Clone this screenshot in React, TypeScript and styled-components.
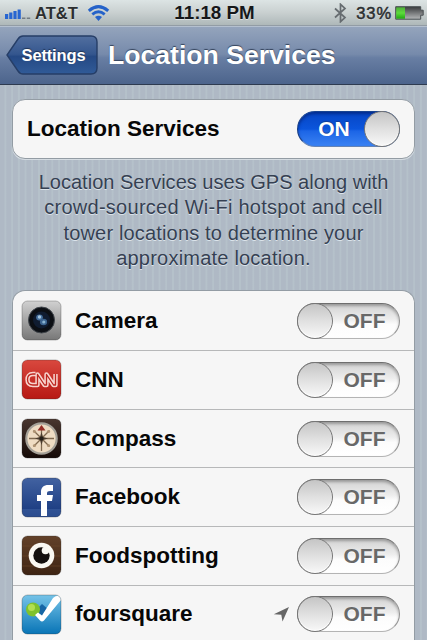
import React from "react";
import styled, {createGlobalStyle} from "styled-components";

const GlobalStyle = createGlobalStyle`
  * {
    box-sizing: border-box;
  }

  body {
    margin: 0;
    overflow: hidden;
    font-family: "Liberation Sans", Arial, sans-serif;
  }
`;

const Screen = styled.main`
  width: 427px;
  height: 640px;
  overflow: hidden;
  background: repeating-linear-gradient(
    90deg,
    #afb9c5 0 4px,
    #b5c1ca 5px 6px,
    #afb9c5 6.7px
  );
`;

const StatusBar = styled.header`
  display: grid;
  grid-template-columns: 1fr auto 1fr;
  align-items: center;
  height: 26px;
  padding: 0 3px 0 5px;
  background: linear-gradient(#dce4e4, #c9d0d0 50%, #aeb8b9);
  border-bottom: 1px solid #929ca5;
  color: #151719;
`;

const StatusGroup = styled.div<{$end?: boolean}>`
  display: flex;
  align-items: center;
  justify-content: ${({$end}) => ($end ? "flex-end" : "flex-start")};
`;

const StatusText = styled.span<{$size?: number; $spacing?: number}>`
  font-weight: 700;
  font-size: ${({$size = 18}) => $size}px;
  letter-spacing: ${({$spacing = 0}) => $spacing}px;
  line-height: 26px;
  white-space: nowrap;
  text-shadow: 0 1px 0 rgba(255, 255, 255, 0.5);
`;

const Carrier = styled(StatusText)`
  margin: 0 9px 0 4px;
  color: #2b2e30;
`;

const Percent = styled(StatusText)`
  margin: 0 3px 0 9px;
  color: #2b2e30;
  font-weight: 400;
  -webkit-text-stroke: 0.5px #2b2e30;
`;

const NavBar = styled.nav`
  display: flex;
  align-items: center;
  height: 59px;
  padding: 0 0 1px 6px;
  background: linear-gradient(#94a4bc, #768aab 48%, #687ea3 54%, #4c648c);
  border-top: 1px solid #b4c0cf;
  border-bottom: 1px solid #2e3b50;
`;

const BackButton = styled.button`
  display: grid;
  width: 92px;
  height: 40px;
  padding: 0;
  border: none;
  background: none;

  > * {
    grid-area: 1 / 1;
  }
`;

const BackLabel = styled.span`
  align-self: center;
  z-index: 1;
  padding: 0 0 0 3px;
  color: #fff;
  font: 700 16.5px "Liberation Sans", Arial, sans-serif;
  letter-spacing: -0.15px;
  text-shadow: 0 -1px 1px #203354;
`;

const Title = styled.h1`
  margin: 0 0 1px 10px;
  color: #fff;
  font-size: 26.6px;
  line-height: 32px;
  white-space: nowrap;
  text-shadow: 0 -1px 1px #34435c;
`;

const Content = styled.div`
  padding: 14px 12px 0;
`;

const Group = styled.section`
  overflow: hidden;
  background: #f6f6f6;
  border: 1px solid #939ca4;
  border-radius: 13px;
  box-shadow: 0 1px 0 #d5dce2;
`;

const AppGroup = styled(Group)`
  margin-top: 19px;
  border-bottom: none;
  border-radius: 13px 13px 0 0;
`;

const Row = styled.div<{$master?: boolean}>`
  display: flex;
  align-items: center;
  height: ${({$master}) => ($master ? 58 : 59)}px;
  padding: 0 14px 0 ${({$master}) => ($master ? 14 : 8)}px;

  & + & {
    height: 58.6px;
    border-top: 1px solid #b7b8b9;
  }
`;

const RowLabel = styled.span<{$inset?: boolean}>`
  flex: 1;
  margin-left: ${({$inset}) => ($inset ? 13 : 0)}px;
  color: #070707;
  font-weight: 700;
  font-size: 22.5px;
  line-height: 28px;
`;

const Description = styled.p`
  margin: 11px 0 0;
  color: #354052;
  font-size: 20.05px;
  line-height: 25.3px;
  text-align: center;
  text-shadow: 0 1px 0 #dce4eb;
`;

const Line = styled.span<{$spacing?: number}>`
  display: block;
  letter-spacing: ${({$spacing = 0}) => $spacing}px;
`;

const Track = styled.button<{$on: boolean}>`
  display: flex;
  flex-direction: ${({$on}) => ($on ? "row-reverse" : "row")};
  align-items: center;
  width: 103px;
  height: 36px;
  padding: 0;
  border: 1px solid;
  border-color: ${({$on}) =>
    $on ? "#174391 #43638f #6684b4 #153b83" : "#6e6e6e #929292 #b4b4b4 #777"};
  border-radius: 19px;
  background: ${({$on}) =>
    $on
      ? "linear-gradient(#0645c4, #0b55dc 50%, #1c65e6 56%, #3a82f3)"
      : "linear-gradient(#d2d2d2, #ededed 45%, #fcfcfc 60%, #fff)"};
  box-shadow: inset 0 2px 3px
    ${({$on}) => ($on ? "rgba(0, 20, 90, 0.5)" : "rgba(0, 0, 0, 0.28)")};
`;

const Knob = styled.span`
  flex: none;
  width: 36px;
  height: 36px;
  margin: 0 -1px;
  border: 1px solid #777;
  border-radius: 50%;
  background: linear-gradient(#c5c5c5, #e0e0e0 50%, #f8f8f8);
  box-shadow: inset 0 -1px 1px #fff;
`;

const ToggleText = styled.span<{$on: boolean}>`
  flex: 1;
  padding: ${({$on}) => ($on ? "0 0 0 5px" : "0 2px 0 0")};
  color: ${({$on}) => ($on ? "#fff" : "#686868")};
  font: 700 21px "Liberation Sans", Arial, sans-serif;
  text-align: center;
  text-shadow: ${({$on}) => ($on ? "0 -1px 1px #153d91" : "0 1px 0 #fff")};
`;

const Arrow = styled.svg`
  margin-right: 7px;
`;

const Toggle = ({on = false}: {on?: boolean}) => (
  <Track $on={on} role="switch" aria-checked={on}>
    <Knob />
    <ToggleText $on={on}>{on ? "ON" : "OFF"}</ToggleText>
  </Track>
);

const SignalIcon = () => (
  <svg width="26" height="14" viewBox="0 0 26 14" fill="#2866d1">
    <path d="M0 8h3.2v5H0zM4.2 6.5h3.2V13H4.2zM8.4 5h3.2v8H8.4zM12.6 3.5h3.2V13h-3.2z" />
    <path d="M17 11.5h3.4V13H17zM21.8 11.5h3.4V13h-3.4z" fill="#727b83" />
  </svg>
);

const WifiIcon = () => (
  <svg width="23" height="17" viewBox="0 0 23 17" fill="none" stroke="#2562c9">
    <path d="M1.8 5.8Q11.5-2.5 21.2 5.8" strokeWidth="3" />
    <path d="M5.3 9.3q6.2-5.1 12.4 0" strokeWidth="2.8" />
    <path d="M8 12.1q3.5-2.8 7 0L11.5 16z" fill="#2562c9" stroke="none" />
  </svg>
);

const BluetoothIcon = () => (
  <svg width="13" height="20" viewBox="0 0 13 20" fill="none">
    <path
      d="M1 5.5l10 9-4.5 4.2V1.3L11 5.5l-10 9"
      stroke="#666c70"
      strokeWidth="1.7"
    />
  </svg>
);

const BatteryIcon = () => (
  <svg width="29" height="14" viewBox="0 0 29 14">
    <defs>
      <linearGradient id="charge" x2="0" y2="1">
        <stop stopColor="#4fae3a" />
        <stop offset=".5" stopColor="#5ddc3c" />
        <stop offset="1" stopColor="#20a811" />
      </linearGradient>
      <linearGradient id="empty" x2="0" y2="1">
        <stop stopColor="#393b3d" />
        <stop offset="1" stopColor="#b6b8b9" />
      </linearGradient>
    </defs>
    <path d="M.7.7h25v3.5h2.5v5h-2.5v4H.7z" fill="url(#empty)" stroke="#494f52" />
    <path d="M1.2 1.3H10v11.4H1.2z" fill="url(#charge)" />
  </svg>
);

const iconNames = [
  "Camera",
  "CNN",
  "Compass",
  "Facebook",
  "Foodspotting",
  "foursquare",
] as const;

type AppName = (typeof iconNames)[number];

const fills: Record<AppName, [string, string]> = {
  Camera: ["#d1d1d1", "#777"],
  CNN: ["#d9483e", "#b71914"],
  Compass: ["#49362f", "#160b08"],
  Facebook: ["#4262a1", "#16377d"],
  Foodspotting: ["#634129", "#3e2413"],
  foursquare: ["#75c3e8", "#0874b6"],
};

const cnnPath =
  "M13.5 14H11c-4 0-5.5 2.5-5.5 5.5S7 25 11 25h4.5V14.5L22.5 25h2V14.5L31.5 25h2V14";

const drawings: Record<AppName, React.ReactNode> = {
  Camera: (
    <>
      <circle cx="19.5" cy="19" r="13" fill="#0c0f14" stroke="#42474d" />
      <circle cx="19.5" cy="19" r="8.5" fill="#101c30" />
      <ellipse cx="17.5" cy="16.5" rx="3.4" ry="3" fill="#456f9c" />
      <ellipse cx="21.5" cy="21" rx="3.6" ry="3.2" fill="#3c648f" />
      <circle cx="17.5" cy="16" r="1.7" fill="#a6c6df" />
      <circle cx="21.8" cy="21" r="1.6" fill="#8ab4d1" />
    </>
  ),
  CNN: (
    <g fill="none" strokeLinejoin="round">
      <path d={cnnPath} stroke="#f7d3cd" strokeWidth="4.4" />
      <path d={cnnPath} stroke="#bd2720" strokeWidth="1.3" />
    </g>
  ),
  Compass: (
    <>
      <circle cx="19.5" cy="19.5" r="15.2" fill="#efdcc3" stroke="#a5a198" strokeWidth="2.2" />
      <path
        d="M19.5 7v25M7 19.5h25M11.5 11.5l16 16M27.5 11.5l-16 16"
        stroke="#80694f"
        strokeWidth="1.3"
      />
      <g fill="#b09474">
        <circle cx="12.5" cy="12.5" r="1.6" />
        <circle cx="26.5" cy="12.5" r="1.6" />
        <circle cx="12.5" cy="26.5" r="1.6" />
        <circle cx="26.5" cy="26.5" r="1.6" />
      </g>
      <path
        d="M19.5 13l1.5 5 5 1.5-5 1.5-1.5 5-1.5-5-5-1.5 5-1.5z"
        fill="#4c3d2f"
      />
      <path d="M19.5 6l4 5.5h-8z" fill="#973028" />
      <circle cx="19.5" cy="19.5" r="2" fill="#262019" />
    </>
  ),
  Facebook: (
    <>
      <path d="M0 31h39v8H0z" fill="#5475b1" opacity=".35" />
      <path
        d="M19 38V23h-4v-6h4v-3c0-4.7 2.8-7 7.2-7H31v6h-3c-2 0-3 .7-3 2.4V17h6l-1 6h-5v15z"
        fill="#fff"
      />
    </>
  ),
  Foodspotting: (
    <>
      <path d="M0 10h39M0 20h39M0 30h39" stroke="#754c2d" opacity=".5" />
      <circle cx="19.5" cy="19.5" r="12.8" fill="#faf8f2" />
      <circle cx="19.5" cy="19.5" r="8.2" fill="#15100e" />
      <circle cx="23.5" cy="14.5" r="3.8" fill="#faf8f2" />
    </>
  ),
  foursquare: (
    <>
      <path d="M13 16l7-7 7 6-8 9z" fill="#1666a5" />
      <circle cx="11" cy="14.5" r="7" fill="#7fc22d" />
      <circle cx="9.5" cy="12.5" r="3.5" fill="#b2df50" />
      <path d="M13 20l3-2.5 4 3L31 3q3-3 8-2v4L22 25.5q-2 2-4 0z" fill="#fff" />
    </>
  ),
};

const AppIcon = ({name}: {name: AppName}) => (
  <svg width="41" height="41" viewBox="-1 -1 41 41">
    <defs>
      <linearGradient id={`fill-${name}`} x2="0" y2="1">
        <stop stopColor={fills[name][0]} />
        <stop offset="1" stopColor={fills[name][1]} />
      </linearGradient>
      <clipPath id={`clip-${name}`}>
        <rect width="39" height="39" rx="5.5" />
      </clipPath>
    </defs>
    <g clipPath={`url(#clip-${name})`}>
      <rect width="39" height="39" fill={`url(#fill-${name})`} />
      {drawings[name]}
    </g>
    <rect width="39" height="39" rx="5.5" fill="none" stroke="#333" strokeOpacity=".3" />
  </svg>
);

const App = () => {
  return (
    <Screen>
      <GlobalStyle />
      <StatusBar>
        <StatusGroup>
          <SignalIcon />
          <Carrier $size={16.5}>AT&amp;T</Carrier>
          <WifiIcon />
        </StatusGroup>
        <StatusText $size={18.8}>11:18 PM</StatusText>
        <StatusGroup $end>
          <BluetoothIcon />
          <Percent $size={16.5} $spacing={0.9}>
            33%
          </Percent>
          <BatteryIcon />
        </StatusGroup>
      </StatusBar>

      <NavBar>
        <BackButton>
          <svg width="92" height="40" viewBox="0 0 92 40">
            <defs>
              <linearGradient id="back" x2="0" y2="1">
                <stop stopColor="#526f9f" />
                <stop offset=".48" stopColor="#34568e" />
                <stop offset=".54" stopColor="#254984" />
                <stop offset="1" stopColor="#315b98" />
              </linearGradient>
            </defs>
            <path
              d="M17 1h68q6 0 6 6v26q0 6-6 6H17q-3 0-5-3L1 20 12 4q2-3 5-3z"
              fill="url(#back)"
              stroke="#263e67"
              strokeWidth="1.4"
            />
          </svg>
          <BackLabel>Settings</BackLabel>
        </BackButton>
        <Title>Location Services</Title>
      </NavBar>

      <Content>
        <Group>
          <Row $master>
            <RowLabel>Location Services</RowLabel>
            <Toggle on />
          </Row>
        </Group>

        <Description>
          <Line>Location Services uses GPS along with</Line>
          <Line $spacing={0.25}>crowd-sourced Wi-Fi hotspot and cell</Line>
          <Line $spacing={0.15}>tower locations to determine your</Line>
          <Line $spacing={0.2}>approximate location.</Line>
        </Description>

        <AppGroup>
          {iconNames.map((name) => (
            <Row key={name}>
              <AppIcon name={name} />
              <RowLabel $inset>{name}</RowLabel>
              {name === "foursquare" && (
                <Arrow width="17" height="17" viewBox="0 0 17 17">
                  <path d="M16 1L9.5 15.5 8.3 8.7.8 8.2z" fill="#666" />
                </Arrow>
              )}
              <Toggle />
            </Row>
          ))}
        </AppGroup>
      </Content>
    </Screen>
  );
};

export default App;
